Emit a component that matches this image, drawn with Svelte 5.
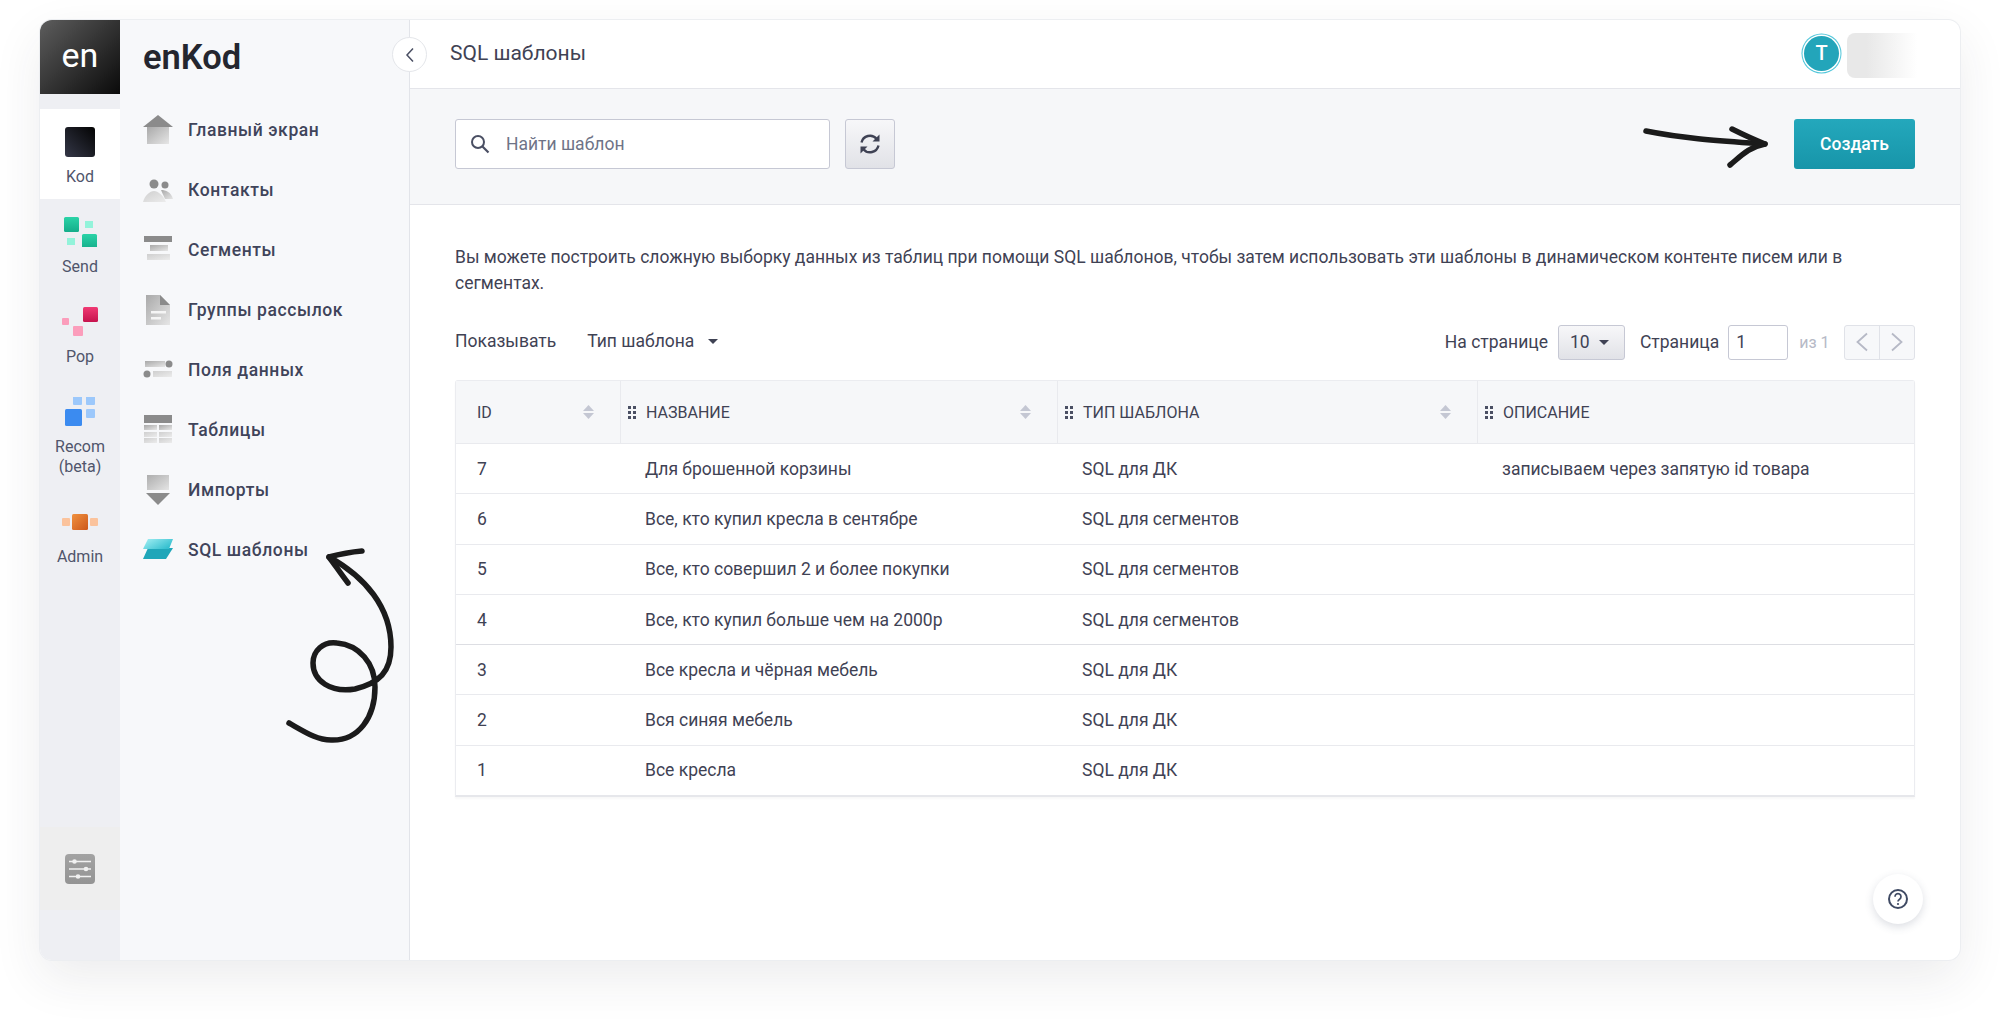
<script>
  const apps = [
    { name: "Kod", icon: "kod", active: true },
    { name: "Send", icon: "send" },
    { name: "Pop", icon: "pop" },
    { name: "Recom (beta)", icon: "recom" },
    { name: "Admin", icon: "admin" }
  ];

  const menu = [
    { name: "Главный экран", icon: "home" },
    { name: "Контакты", icon: "contacts" },
    { name: "Сегменты", icon: "segments" },
    { name: "Группы рассылок", icon: "groups" },
    { name: "Поля данных", icon: "fields" },
    { name: "Таблицы", icon: "tables" },
    { name: "Импорты", icon: "imports" },
    { name: "SQL шаблоны", icon: "sql" }
  ];

  const rows = [
    { id: 7, name: "Для брошенной корзины", type: "SQL для ДК", text: "записываем через запятую id товара" },
    { id: 6, name: "Все, кто купил кресла в сентябре", type: "SQL для сегментов", text: "" },
    { id: 5, name: "Все, кто совершил 2 и более покупки", type: "SQL для сегментов", text: "" },
    { id: 4, name: "Все, кто купил больше чем на 2000р", type: "SQL для сегментов", text: "" },
    { id: 3, name: "Все кресла и чёрная мебель", type: "SQL для ДК", text: "" },
    { id: 2, name: "Вся синяя мебель", type: "SQL для ДК", text: "" },
    { id: 1, name: "Все кресла", type: "SQL для ДК", text: "" }
  ];

  const columns = [
    { name: "ID", sort: true },
    { name: "Название", sort: true, grip: true },
    { name: "Тип шаблона", sort: true, grip: true },
    { name: "Описание", grip: true }
  ];
</script>

{#snippet grip()}
  <svg class="grip" width="8" height="13" viewBox="0 0 8 13">
    <rect x="0" y="0" width="3" height="3" /><rect x="5" y="0" width="3" height="3" />
    <rect x="0" y="5" width="3" height="3" /><rect x="5" y="5" width="3" height="3" />
    <rect x="0" y="10" width="3" height="3" /><rect x="5" y="10" width="3" height="3" />
  </svg>
{/snippet}

{#snippet sort()}
  <svg class="sort" width="11" height="14" viewBox="0 0 11 14">
    <path d="M5.500 0 11 6H0z" /><path d="M0 8h11l-5.500 6z" />
  </svg>
{/snippet}

{#snippet appIcon(kind)}
  <svg width="36" height="30" viewBox="0 0 36 30">
    {#if kind === "kod"}
      <rect x="3" y="0" width="30" height="30" rx="3" fill="url(#gKod)" />
    {:else if kind === "send"}
      <rect x="2" y="0" width="15" height="15" rx="1.500" fill="url(#gSend)" />
      <rect x="20" y="17" width="15" height="15" rx="1.500" fill="url(#gSend)" />
      <rect x="23" y="4" width="8" height="7" fill="#93f3da" />
      <rect x="5" y="21" width="8" height="7" fill="#93f3da" />
    {:else if kind === "pop"}
      <rect x="21" y="0" width="15" height="15" rx="1.500" fill="url(#gPop)" />
      <rect x="0" y="11" width="7" height="7" rx="1" fill="#fb9dbb" />
      <rect x="11" y="19" width="10" height="10" rx="1" fill="#fb9dbb" />
    {:else if kind === "recom"}
      <rect x="3" y="12" width="17" height="17" rx="1.500" fill="#3b8bf0" />
      <rect x="11" y="-1" width="9" height="9" rx="1" fill="#9cc8fb" />
      <rect x="24" y="-1" width="9" height="9" rx="1" fill="#9cc8fb" />
      <rect x="24" y="12" width="9" height="9" rx="1" fill="#9cc8fb" />
    {:else if kind === "admin"}
      <rect x="10" y="7" width="16" height="16" rx="1.500" fill="url(#gAdmin)" />
      <rect x="0" y="11" width="8" height="8" rx="1" fill="#fbc39c" />
      <rect x="28" y="11" width="8" height="8" rx="1" fill="#fbc39c" />
    {/if}
  </svg>
{/snippet}

{#snippet menuIcon(kind)}
  <svg width="30" height="30" viewBox="0 0 30 30">
    {#if kind === "home"}
      <path d="M15 0 30 12H0z" fill="#8b8b8b" />
      <rect x="4" y="12" width="22" height="17" fill="url(#gGray)" />
    {:else if kind === "contacts"}
      <circle cx="11" cy="9" r="4.500" fill="#8b8b8b" />
      <circle cx="22" cy="10" r="3.500" fill="#8b8b8b" />
      <path d="M18 15c5 0 10 2 12 9h-8z" fill="url(#gGray)" />
      <path d="M0 27c2-7 7-11 11-11s9 4 12 11z" fill="url(#gLight)" />
    {:else if kind === "segments"}
      <rect x="1" y="1" width="28" height="6" fill="#8b8b8b" />
      <rect x="7" y="10" width="18" height="6" fill="url(#gGray)" />
      <rect x="4" y="19" width="23" height="6" fill="url(#gLight)" />
    {:else if kind === "groups"}
      <path d="M3 0h14l10 10v20H3z" fill="url(#gGray)" />
      <path d="M17 0l10 10H17z" fill="#8b8b8b" />
      <rect x="8" y="16" width="15" height="2.500" fill="#f5f5f5" />
      <rect x="8" y="22" width="10" height="2.500" fill="#f5f5f5" />
    {:else if kind === "fields"}
      <rect x="2" y="6" width="20" height="6" fill="url(#gGray)" />
      <circle cx="26" cy="9" r="3.500" fill="#8b8b8b" />
      <circle cx="4" cy="19" r="3.500" fill="#8b8b8b" />
      <rect x="10" y="16" width="19" height="6" fill="url(#gLight)" />
    {:else if kind === "tables"}
      <rect x="1" y="0" width="28" height="8" fill="#8b8b8b" />
      <g fill="url(#gGray)">
        <rect x="1" y="10" width="13" height="5" /><rect x="16" y="10" width="13" height="5" />
      </g>
      <g fill="url(#gLight)">
        <rect x="1" y="17" width="13" height="5" /><rect x="16" y="17" width="13" height="5" />
        <rect x="1" y="23" width="13" height="5" /><rect x="16" y="23" width="13" height="5" />
      </g>
    {:else if kind === "imports"}
      <rect x="4" y="0" width="22" height="15" fill="url(#gGrayUp)" />
      <path d="M3 18h24L15 30z" fill="#8b8b8b" />
    {:else if kind === "sql"}
      <path d="M5 13h25l-7 11H0z" fill="#1fa6b9" />
      <path d="M5 4h25l-4 10H0z" fill="url(#gSql)" />
    {/if}
  </svg>
{/snippet}

<div class="page">
  <svg class="defs" width="0" height="0">
    <defs>
      <linearGradient id="gKod" x1="0" y1="1" x2="1" y2="0"><stop offset="0" stop-color="#343747" /><stop offset="1" stop-color="#030303" /></linearGradient>
      <linearGradient id="gSend" x1="0" y1="0" x2="0" y2="1"><stop offset="0" stop-color="#2bd3a7" /><stop offset="1" stop-color="#15ad8a" /></linearGradient>
      <linearGradient id="gPop" x1="0" y1="0" x2="0" y2="1"><stop offset="0" stop-color="#f03a73" /><stop offset="1" stop-color="#c6134e" /></linearGradient>
      <linearGradient id="gAdmin" x1="0" y1="0" x2="1" y2="1"><stop offset="0" stop-color="#f0913f" /><stop offset="1" stop-color="#cd581a" /></linearGradient>
      <linearGradient id="gGray" x1="0" y1="0" x2="1" y2="1"><stop offset="0" stop-color="#a9a9a9" /><stop offset="1" stop-color="#e6e6e6" /></linearGradient>
      <linearGradient id="gGrayUp" x1="1" y1="1" x2="0" y2="0"><stop offset="0" stop-color="#e4e4e4" /><stop offset="1" stop-color="#adadad" /></linearGradient>
      <linearGradient id="gLight" x1="0" y1="0" x2="1" y2="1"><stop offset="0" stop-color="#cfcfcf" /><stop offset="1" stop-color="#ececec" /></linearGradient>
      <linearGradient id="gSql" x1="0" y1="0" x2="1" y2="0.600"><stop offset="0" stop-color="#a6f0f4" /><stop offset="1" stop-color="#34bfcf" /></linearGradient>
      <linearGradient id="gSettings" x1="0" y1="0" x2="0" y2="1"><stop offset="0" stop-color="#a3a3a3" /><stop offset="1" stop-color="#949494" /></linearGradient>
    </defs>
  </svg>

  <div class="window">
    <nav class="rail">
      <div class="logo">en</div>
      <div class="rail-gap"></div>
      {#each apps as app}
        <div class="app" class:active={app.active}>
          <div class="app-icon">{@render appIcon(app.icon)}</div>
          <div class="app-name">{app.name}</div>
        </div>
      {/each}
      <div class="settings">
        <svg width="30" height="30" viewBox="0 0 30 30">
          <rect width="30" height="30" rx="4" fill="url(#gSettings)" />
          <g stroke="#f1f1f1" stroke-width="1.300">
            <path d="M4 7.500h22M4 15h22M4 22.500h22" />
          </g>
          <g fill="#f1f1f1">
            <circle cx="9.500" cy="7.500" r="2.300" /><circle cx="21" cy="15" r="2.300" /><circle cx="13" cy="22.500" r="2.300" />
          </g>
        </svg>
      </div>
    </nav>

    <aside class="sidebar">
      <div class="brand">enKod</div>
      {#each menu as item}
        <div class="menu-item">
          {@render menuIcon(item.icon)}
          <span>{item.name}</span>
        </div>
      {/each}
      <button class="collapse" aria-label="Свернуть">
        <svg width="10" height="16" viewBox="0 0 10 16"><path d="M8 1.500 2 8l6 6.500" fill="none" stroke="#4a4f63" stroke-width="1.500" /></svg>
      </button>
    </aside>

    <main class="main">
      <header class="topbar">
        <div class="title">SQL шаблоны</div>
        <div class="user">
          <div class="avatar">T</div>
          <div class="username"></div>
        </div>
      </header>

      <div class="toolbar">
        <div class="search">
          <svg width="20" height="20" viewBox="0 0 20 20"><circle cx="8" cy="8" r="6" fill="none" stroke="#4a4f63" stroke-width="2" /><path d="m12.500 12.500 6 6" stroke="#4a4f63" stroke-width="2.200" /></svg>
          <span>Найти шаблон</span>
        </div>
        <button class="refresh" aria-label="Обновить">
          <svg width="22" height="22" viewBox="0 0 22 22" fill="none" stroke="#3f4254" stroke-width="2.400">
            <path d="M2.500 9.500A8.700 8.700 0 0 1 17.600 5.800" />
            <path d="M19.500 12.500A8.700 8.700 0 0 1 4.400 16.200" />
            <path d="M20.500 1.500v7h-7z" fill="#3f4254" stroke="none" />
            <path d="M1.500 20.500v-7h7z" fill="#3f4254" stroke="none" />
          </svg>
        </button>
        <button class="create">Создать</button>
      </div>

      <div class="content">
        <p class="hint">Вы можете построить сложную выборку данных из таблиц при помощи SQL шаблонов, чтобы затем использовать эти шаблоны в динамическом контенте писем или в сегментах.</p>

        <div class="controls">
          <span class="lift">Показывать</span>
          <span class="type-filter lift">Тип шаблона <i class="caret"></i></span>
          <div class="pager">
            <span>На странице</span>
            <div class="per-page">10 <i class="caret"></i></div>
            <span class="page-label">Страница</span>
            <div class="page-input">1</div>
            <span class="page-total">из 1</span>
            <div class="arrows">
              <div class="arrow-btn">
                <svg width="14" height="20" viewBox="0 0 14 20"><path d="M12 1.500 2.500 10l9.500 8.500" fill="none" stroke="#b6b9c6" stroke-width="1.800" /></svg>
              </div>
              <div class="arrow-btn">
                <svg width="14" height="20" viewBox="0 0 14 20"><path d="M2 1.500 11.500 10 2 18.500" fill="none" stroke="#b6b9c6" stroke-width="1.800" /></svg>
              </div>
            </div>
          </div>
        </div>

        <div class="table">
          <div class="row head">
            {#each columns as col}
              <div class="cell">
                {#if col.grip}{@render grip()}{/if}
                <span class="col-name">{col.name}</span>
                {#if col.sort}{@render sort()}{/if}
              </div>
            {/each}
          </div>
          {#each rows as row}
            <div class="row" class:split={row.id === 3}>
              <div class="cell">{row.id}</div>
              <div class="cell">{row.name}</div>
              <div class="cell">{row.type}</div>
              <div class="cell">{row.text}</div>
            </div>
          {/each}
        </div>
      </div>

      <button class="help" aria-label="Помощь">
        <svg width="22" height="22" viewBox="0 0 22 22" fill="none">
          <circle cx="11" cy="11" r="9" stroke="#3f4a63" stroke-width="2" />
          <path d="M8 8.700a3 3 0 1 1 4.600 2.500c-1 .7-1.600 1.200-1.600 2.300" stroke="#3f4a63" stroke-width="1.700" />
          <circle cx="11" cy="16" r="1.100" fill="#3f4a63" />
        </svg>
      </button>
    </main>

    <!-- hand drawn arrows lying over the page, page coordinates -->
    <svg class="scribble" width="2000" height="1020" viewBox="0 0 2000 1020" fill="none" stroke="#1b1b1b" stroke-width="5.500" stroke-linecap="round" stroke-linejoin="round">
      <path d="M1646 131c40 8 78 10 119 13" />
      <path d="M1732 129c12 6 23 11 33 15-16 3-24 12-35 21" />
      <path d="M329 557c36 20 62 50 62 90 0 25-12 36-36 42-24 4-42-8-42-26 0-12 10-22 24-20 22 2 38 20 38 44 0 30-16 54-44 53-14 0-26-8-42-17" />
      <path d="M362 551c-12 1-22 3-33 6 6 8 12 17 19 26" />
    </svg>
  </div>
</div>

<style>
  :global(body) {
    margin: 0;
    background: #fff;
    font-family: Roboto, "Liberation Sans", sans-serif;
    color: #3f4254;
  }

  .page {
    width: 2000px;
    height: 1020px;
    padding: 20px 40px 60px;
    box-sizing: border-box;
    overflow: hidden;
  }

  .defs {
    position: absolute;
  }

  .window {
    position: relative;
    display: flex;
    height: 940px;
    background: #fff;
    border-radius: 12px;
    box-shadow: 0 0 0 1px #eceef1, 0 18px 50px rgba(40, 45, 60, 0.09);
  }

  .rail {
    width: 80px;
    flex: none;
    display: flex;
    flex-direction: column;
    background: #eeeff3;
    border-radius: 12px 0 0 12px;
    overflow: hidden;
  }

  .logo {
    height: 74px;
    line-height: 71px;
    text-align: center;
    color: #fff;
    font-size: 34px;
    background: linear-gradient(135deg, #5d5d5d, #0a0a0a);
  }

  .rail-gap {
    height: 15px;
  }

  .app {
    padding: 18px 0 12px;
    text-align: center;
    font-size: 16px;
    line-height: 20px;
    color: #50556b;
  }

  .app.active {
    background: #fff;
  }

  .app-icon {
    height: 30px;
    margin-bottom: 10px;
    display: flex;
    justify-content: center;
  }

  .app-name {
    padding: 0 10px;
  }

  .settings {
    margin-top: auto;
    margin-bottom: 50px;
    height: 83px;
    display: flex;
    align-items: center;
    justify-content: center;
    background: #eeeeee;
  }

  .sidebar {
    position: relative;
    width: 290px;
    flex: none;
    box-sizing: border-box;
    padding-left: 23px;
    background: #f7f8fa;
    border-right: 1px solid #e2e4e9;
  }

  .brand {
    height: 80px;
    line-height: 74px;
    font-size: 34.500px;
    font-weight: 600;
    color: #24262f;
  }

  .menu-item {
    height: 60px;
    display: flex;
    align-items: center;
    gap: 15px;
    font-size: 17.500px;
    font-weight: 500;
    letter-spacing: 0.600px;
    color: #40445a;
  }

  .collapse {
    position: absolute;
    top: 17px;
    right: -18px;
    width: 35px;
    height: 35px;
    padding: 0;
    display: flex;
    align-items: center;
    justify-content: center;
    background: #fff;
    border: 1px solid #e4e6ea;
    border-radius: 50%;
  }

  .main {
    position: relative;
    flex: 1;
    min-width: 0;
    display: flex;
    flex-direction: column;
  }

  .topbar {
    height: 68px;
    flex: none;
    display: flex;
    align-items: center;
    justify-content: space-between;
    padding: 0 35px 0 40px;
    border-bottom: 1px solid #e4e5ea;
  }

  .title {
    padding-bottom: 3px;
    font-size: 21px;
    color: #3f4254;
  }

  .user {
    display: flex;
    align-items: center;
    gap: 8px;
  }

  .avatar {
    width: 35px;
    height: 35px;
    margin-bottom: 2px;
    line-height: 35px;
    text-align: center;
    color: #fff;
    font-size: 20px;
    font-weight: 500;
    background: #23a5ba;
    border-radius: 50%;
    box-shadow: 0 0 0 1.500px #fff, 0 0 0 2.500px #4fc6da;
  }

  .username {
    width: 78px;
    height: 45px;
    margin-top: 3px;
    border-radius: 8px;
    background: linear-gradient(90deg, #e8e8e8 25%, #fff 90%);
  }

  .toolbar {
    height: 116px;
    flex: none;
    box-sizing: border-box;
    display: flex;
    align-items: flex-start;
    padding: 30px 45px 0;
    background: #f6f7f9;
    border-bottom: 1px solid #e4e5ea;
  }

  .search {
    width: 375px;
    height: 50px;
    box-sizing: border-box;
    display: flex;
    align-items: center;
    gap: 16px;
    padding-left: 14px;
    background: #fff;
    border: 1px solid #c6c8d4;
    border-radius: 3px;
    font-size: 17.500px;
    color: #6e7387;
  }

  .refresh {
    width: 50px;
    height: 50px;
    margin-left: 15px;
    padding: 0;
    display: flex;
    align-items: center;
    justify-content: center;
    background: linear-gradient(#f7f7f9, #e1e2e7);
    border: 1px solid #c6c8d4;
    border-radius: 3px;
  }

  .create {
    width: 121px;
    height: 50px;
    margin-left: auto;
    padding: 0;
    color: #fff;
    font-family: inherit;
    font-size: 17.500px;
    font-weight: 500;
    background: linear-gradient(#24a8bc, #1795a9);
    border: none;
    border-radius: 3px;
  }

  .content {
    padding: 39px 45px 0;
  }

  .hint {
    margin: 0;
    font-size: 17.500px;
    line-height: 26px;
    color: #3f4254;
  }

  .controls {
    display: flex;
    align-items: center;
    height: 36px;
    margin-top: 28px;
    font-size: 17.500px;
  }

  .lift {
    margin-bottom: 2px;
  }

  .type-filter {
    margin-left: 31px;
    display: flex;
    align-items: center;
    gap: 14px;
  }

  .caret {
    display: inline-block;
    border-top: 5px solid #3f4254;
    border-left: 5px solid transparent;
    border-right: 5px solid transparent;
  }

  .pager {
    margin-left: auto;
    display: flex;
    align-items: center;
  }

  .per-page {
    width: 67px;
    height: 35px;
    box-sizing: border-box;
    margin-left: 10px;
    padding-left: 11px;
    display: flex;
    align-items: center;
    gap: 9px;
    background: linear-gradient(#f7f7f9, #e1e2e7);
    border: 1px solid #c6c8d4;
    border-radius: 3px;
  }

  .page-label {
    margin-left: 15px;
  }

  .page-input {
    width: 60px;
    height: 35px;
    box-sizing: border-box;
    margin-left: 9px;
    padding-left: 7px;
    line-height: 33px;
    background: #fff;
    border: 1px solid #c6c8d4;
    border-radius: 3px;
  }

  .page-total {
    margin-left: 11px;
    font-size: 16px;
    color: #b6b9c6;
  }

  .arrows {
    display: flex;
    margin-left: 14.500px;
    border: 1px solid #e0e2e8;
    border-radius: 3px;
    background: #f7f8fa;
  }

  .arrow-btn {
    width: 34px;
    height: 33px;
    display: flex;
    align-items: center;
    justify-content: center;
  }

  .arrow-btn + .arrow-btn {
    border-left: 1px solid #e0e2e8;
  }

  .table {
    margin-top: 20px;
    border: 1px solid #ebecf0;
    border-bottom: 2px solid #e6e7eb;
    border-radius: 3px 3px 0 0;
    box-shadow: 0 2px 2px rgba(0, 0, 0, 0.03);
  }

  .row {
    display: grid;
    grid-template-columns: 164px 437px 420px 1fr;
    height: 50.300px;
    align-items: stretch;
    box-sizing: border-box;
    font-size: 17.500px;
    border-top: 1px solid #e9eaee;
  }

  .row.split {
    border-top-color: #dddee3;
  }

  .row.head {
    height: 62px;
    border-top: none;
    background: #f6f7f9;
    font-size: 16px;
  }

  .cell {
    display: flex;
    align-items: center;
    padding-left: 25px;
    min-width: 0;
  }

  .cell:first-child {
    padding-left: 21px;
  }

  .head .cell {
    position: relative;
    padding-right: 26px;
    text-transform: uppercase;
  }

  .head .cell + .cell {
    border-left: 1px solid #e9eaee;
  }

  .col-name {
    flex: 1;
  }

  .grip {
    position: absolute;
    left: 7px;
    fill: #4a4f63;
  }

  .sort {
    fill: #c4c7d3;
  }

  .help {
    position: absolute;
    right: 37px;
    bottom: 36px;
    width: 50px;
    height: 50px;
    padding: 0;
    display: flex;
    align-items: center;
    justify-content: center;
    background: #fff;
    border: none;
    border-radius: 50%;
    box-shadow: 0 3px 8px rgba(60, 70, 100, 0.18);
  }

  .scribble {
    position: absolute;
    left: -40px;
    top: -20px;
    pointer-events: none;
  }
</style>
